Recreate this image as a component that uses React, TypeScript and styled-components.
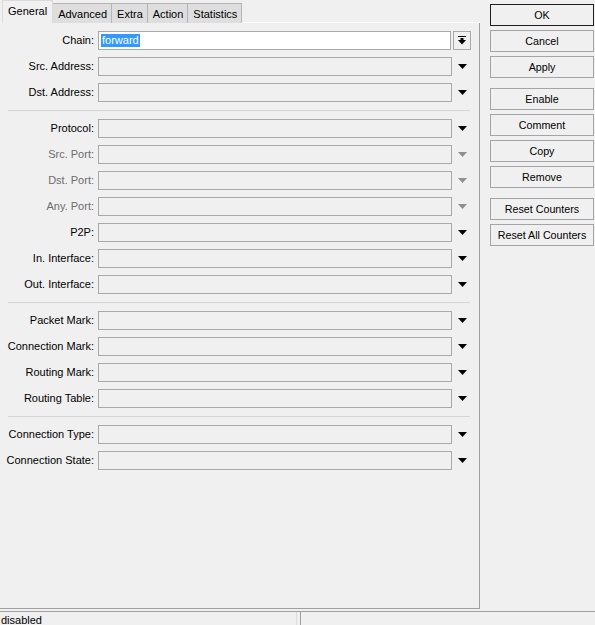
import React from "react"
import styled, { createGlobalStyle, css } from "styled-components"

const GlobalStyle = createGlobalStyle`
	html, body {
		margin: 0;
		padding: 0;
		background: #f0f0f0;
	}
	body {
		font-family: "Liberation Sans", Arial, sans-serif;
		font-size: 11px;
		color: #000;
	}
`

const Window = styled.div`
	width: 595px;
	height: 625px;
	display: flex;
	flex-direction: column;
	overflow: hidden;
	background: #f0f0f0;
`

const Main = styled.div`
	flex: 1;
	display: flex;
	min-height: 0;
`

const LeftPane = styled.div`
	width: 480px;
	display: flex;
	flex-direction: column;
`

const TabStrip = styled.div`
	height: 23px;
	display: flex;
	align-items: flex-end;
	padding-left: 2px;
	border-bottom: 1px solid #ffffff;
	box-sizing: border-box;
`

const Tab = styled.div<{ $active?: boolean }>`
	box-sizing: border-box;
	display: flex;
	align-items: center;
	justify-content: center;
	height: 20px;
	padding: 0 4px 0 5px;
	margin-bottom: -1px;
	background: #dedede;
	border: 1px solid #b4b4b4;
	border-left: none;
	border-bottom: none;
	white-space: nowrap;

	${(p) =>
		p.$active &&
		css`
			height: 23px;
			padding: 0 5px 3px 5px;
			background: #f0f0f0;
			border: 1px solid #dadada;
			border-bottom: none;
		`}
`

const Panel = styled.div`
	flex: 1;
	margin-bottom: 2px;
	border-right: 1px solid #a0a0a0;
	border-bottom: 1px solid #a0a0a0;
	padding-top: 4px;
`

const Row = styled.div`
	height: 26px;
	display: flex;
	align-items: center;
`

const Label = styled.div<{ $disabled?: boolean }>`
	width: 94px;
	text-align: right;
	white-space: nowrap;
	color: ${(p) => (p.$disabled ? "#6d6d6d" : "#000")};
`

const Field = styled.div<{ $white?: boolean; $width?: number }>`
	box-sizing: border-box;
	margin-left: 4px;
	width: ${(p) => p.$width ?? 354}px;
	height: 19px;
	border: 1px solid #a9a9a9;
	background: ${(p) => (p.$white ? "#ffffff" : "#f0f0f0")};
	display: flex;
	align-items: center;
	padding-left: 2px;
`

const Selected = styled.span`
	background: #3399ff;
	color: #fff;
	line-height: 13px;
	padding: 0 1px;
`

const ArrowCell = styled.div<{ $disabled?: boolean }>`
	width: 20px;
	display: flex;
	justify-content: center;
	color: ${(p) => (p.$disabled ? "#8f8f8f" : "#000")};
`

const ChainButton = styled.div`
	box-sizing: border-box;
	margin-left: 2px;
	width: 18px;
	height: 19px;
	border: 1px solid #a9a9a9;
	display: flex;
	align-items: center;
	justify-content: center;
`

const Separator = styled.div`
	margin: 5px 9px 4px 8px;
	border-top: 1px solid #d6d6d6;
`

const RightPane = styled.div`
	flex: 1;
	padding: 4px 1px 0 10px;
	display: flex;
	flex-direction: column;
	gap: 4px;
`

const Button = styled.div<{ $default?: boolean; $gapBefore?: boolean }>`
	box-sizing: border-box;
	height: 22px;
	display: flex;
	align-items: center;
	justify-content: center;
	border: 1px solid ${(p) => (p.$default ? "#1e1e1e" : "#a4a4a4")};
	background: #f0f0f0;
	margin-top: ${(p) => (p.$gapBefore ? "6px" : "0")};
	white-space: nowrap;
	font-size: 10.7px;
`

const StatusBar = styled.div`
	height: 14px;
	border-top: 1px solid #a0a0a0;
	display: flex;
	gap: 3px;
	box-sizing: border-box;
`

const StatusPane = styled.div<{ $grow?: boolean }>`
	width: ${(p) => (p.$grow ? "auto" : "295px")};
	flex: ${(p) => (p.$grow ? 1 : "none")};
	border-right: ${(p) => (p.$grow ? "none" : "1px solid #dcdcdc")};
	border-left: ${(p) => (p.$grow ? "1px solid #a0a0a0" : "none")};
	padding: 2px 0 0 1px;
	line-height: 13px;
	overflow: hidden;
	white-space: nowrap;
`

const DownArrow = () => (
	<svg width="9" height="5" viewBox="0 0 9 5">
		<polygon points="0,0 9,0 4.5,5" fill="currentColor" />
	</svg>
)

const ExpandIcon = () => (
	<svg width="8" height="9" viewBox="0 0 8 9">
		<rect x="0" y="0" width="8" height="1" fill="#000" />
		<rect x="2.5" y="2" width="3" height="3" fill="#000" />
		<polygon points="0,4 8,4 4,8.5" fill="#000" />
	</svg>
)

type FieldDef = { label: string; disabled?: boolean }

const groups: FieldDef[][] = [
	[{ label: "Src. Address:" }, { label: "Dst. Address:" }],
	[
		{ label: "Protocol:" },
		{ label: "Src. Port:", disabled: true },
		{ label: "Dst. Port:", disabled: true },
		{ label: "Any. Port:", disabled: true },
		{ label: "P2P:" },
		{ label: "In. Interface:" },
		{ label: "Out. Interface:" },
	],
	[
		{ label: "Packet Mark:" },
		{ label: "Connection Mark:" },
		{ label: "Routing Mark:" },
		{ label: "Routing Table:" },
	],
	[{ label: "Connection Type:" }, { label: "Connection State:" }],
]

const tabs = ["General", "Advanced", "Extra", "Action", "Statistics"]

const buttons: { text: string; def?: boolean; gap?: boolean }[] = [
	{ text: "OK", def: true },
	{ text: "Cancel" },
	{ text: "Apply" },
	{ text: "Enable", gap: true },
	{ text: "Comment" },
	{ text: "Copy" },
	{ text: "Remove" },
	{ text: "Reset Counters", gap: true },
	{ text: "Reset All Counters" },
]

const FieldRow = ({ f }: { f: FieldDef }) => (
	<Row>
		<Label $disabled={f.disabled}>{f.label}</Label>
		<Field />
		<ArrowCell $disabled={f.disabled}>
			<DownArrow />
		</ArrowCell>
	</Row>
)

export default function App() {
	return (
		<Window>
			<GlobalStyle />
			<Main>
				<LeftPane>
					<TabStrip>
						{tabs.map((t, i) => (
							<Tab key={t} $active={i === 0}>
								{t}
							</Tab>
						))}
					</TabStrip>
					<Panel>
						<Row>
							<Label>Chain:</Label>
							<Field $white $width={353}>
								<Selected>forward</Selected>
							</Field>
							<ChainButton>
								<ExpandIcon />
							</ChainButton>
						</Row>
						{groups.map((g, gi) => (
							<React.Fragment key={gi}>
								{gi > 0 && <Separator />}
								{g.map((f) => (
									<FieldRow key={f.label} f={f} />
								))}
							</React.Fragment>
						))}
					</Panel>
				</LeftPane>
				<RightPane>
					{buttons.map((b) => (
						<Button key={b.text} $default={b.def} $gapBefore={b.gap}>
							{b.text}
						</Button>
					))}
				</RightPane>
			</Main>
			<StatusBar>
				<StatusPane>disabled</StatusPane>
				<StatusPane $grow />
			</StatusBar>
		</Window>
	)
}
